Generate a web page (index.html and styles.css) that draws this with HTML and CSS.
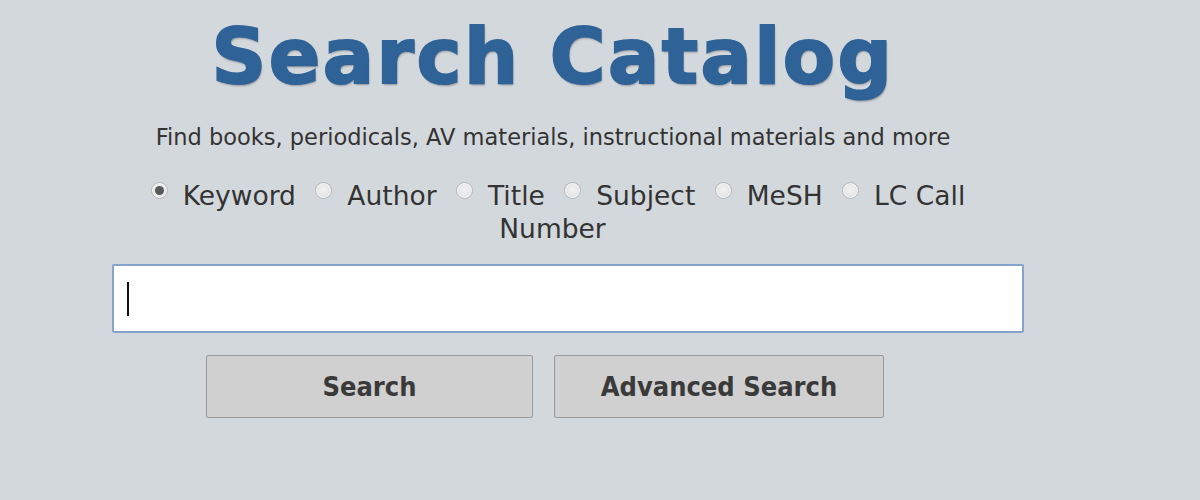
FILE: index.html
```html
<!DOCTYPE html>
<html>
<head>
<meta charset="utf-8">
<link rel="stylesheet" href="styles.css">
</head>
<body>
<main class="catalog">
  <h1 class="title">Search Catalog</h1>
  <p class="subtitle">Find books, periodicals, AV materials, instructional materials and more</p>
  <div class="options">
    <label class="opt"><span class="radio checked"></span><span class="opt-text">Keyword</span></label>
    <label class="opt"><span class="radio"></span><span class="opt-text">Author</span></label>
    <label class="opt"><span class="radio"></span><span class="opt-text">Title</span></label>
    <label class="opt"><span class="radio"></span><span class="opt-text">Subject</span></label>
    <label class="opt"><span class="radio"></span><span class="opt-text">MeSH</span></label>
    <label class="opt"><span class="radio"></span><span class="opt-text">LC Call</span> <span class="opt-text">Number</span></label>
  </div>
  <div class="field"><span class="caret"></span></div>
  <div class="buttons">
    <button class="btn btn-search">Search</button>
    <button class="btn btn-adv">Advanced Search</button>
  </div>
</main>
</body>
</html>
```
FILE: styles.css
```css
html, body {
  margin: 0;
  padding: 0;
  background: #d3d8dd;
}
body {
  width: 1200px;
  height: 500px;
  overflow: hidden;
  font-family: "DejaVu Sans", Verdana, sans-serif;
  color: #333;
}
.catalog {
  width: 882px;
  margin-left: 112px;
  text-align: center;
}
.title {
  margin: 0;
  padding-top: 7px;
  font-family: "DejaVu Sans", Verdana, sans-serif;
  font-weight: bold;
  font-size: 76px;
  line-height: 100px;
  color: #2f6397;
  letter-spacing: 2.5px;
  -webkit-text-stroke: 2px #2f6397;
  text-shadow: 1px 2px 2px rgba(0,0,0,0.3);
}
.subtitle {
  margin: 16px 0 0;
  font-size: 22.5px;
  line-height: 28px;
  color: #333;
}
.options {
  margin: 28px 0 0;
  padding-left: 10px;
  font-size: 26.5px;
  line-height: 33px;
  color: #333;
}
.opt {
  display: inline;
  margin-right: 11px;
}
.opt-text {
  white-space: nowrap;
}
.radio {
  display: inline-block;
  box-sizing: border-box;
  width: 17px;
  height: 17px;
  border-radius: 50%;
  border: 1px solid #b3b6ba;
  background: radial-gradient(circle at 50% 45%, #f2f2f2 0%, #e6e6e6 55%, #d8d8d8 100%);
  box-shadow: inset 0 0 0 1px #f7f7f7;
  vertical-align: 6px;
  margin-right: 15px;
  position: relative;
}
.radio.checked::after {
  content: "";
  position: absolute;
  left: 3px;
  top: 3px;
  width: 9px;
  height: 9px;
  border-radius: 50%;
  background: #585858;
}
.field {
  margin: 19px 0 0;
  width: 908px;
  height: 65px;
  border: 2px solid #86a3cd;
  border-radius: 2px;
  background: #fff;
  display: flex;
  align-items: center;
}
.caret {
  display: block;
  width: 2px;
  height: 34px;
  background: #111;
  margin-left: 13px;
}
.buttons {
  display: flex;
  gap: 21px;
  margin: 22px 0 0 94px;
}
.btn {
  height: 63px;
  border: 1px solid #9a9a9a;
  border-radius: 2px;
  background: #d0d0d0;
  font-family: "DejaVu Sans Condensed", "DejaVu Sans", sans-serif;
  font-weight: bold;
  font-size: 27px;
  color: #3a3a3a;
  padding: 0;
}
.btn-search { width: 327px; }
.btn-adv { width: 330px; }
```
